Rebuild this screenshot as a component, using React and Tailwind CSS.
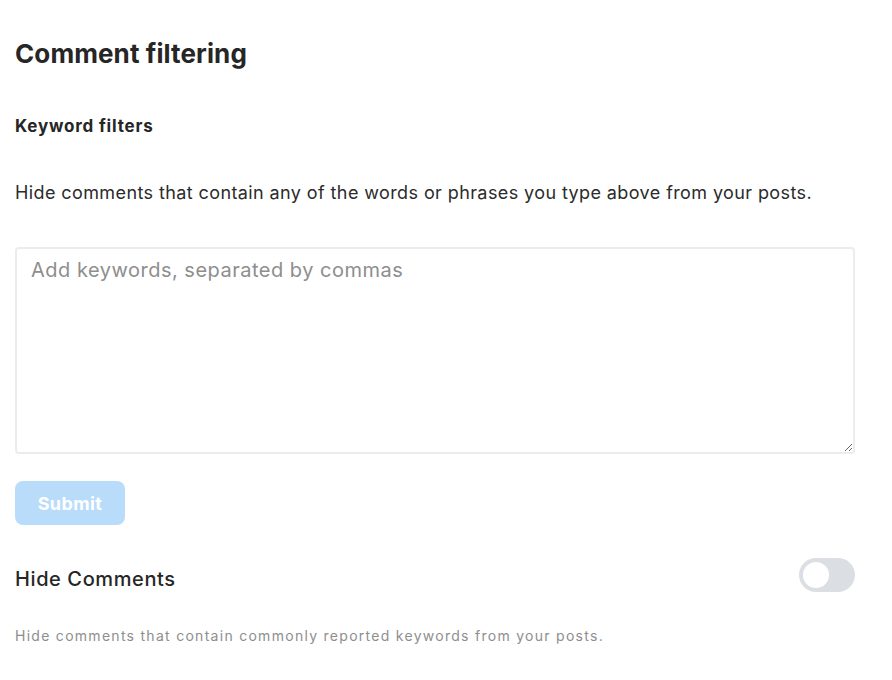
import React, { useState } from "react";

export default function App() {
  const [keywords, setKeywords] = useState("");
  const [hidden, setHidden] = useState(false);

  return (
    <div
      className="min-h-screen w-full bg-white text-[#262626] px-[15px] pt-[38px]"
      style={{ fontFamily: 'Inter, "Liberation Sans", Arial, sans-serif' }}
    >
      <div className="w-[840px]">
        {/* title */}
        <h1 className="text-[26px] leading-[32px] font-bold tracking-[0.1px]">Comment filtering</h1>

        {/* keyword filters */}
        <h2 className="mt-[46px] text-[17px] leading-[20px] font-bold tracking-[0.8px]">Keyword filters</h2>
        <p className="mt-[46px] text-[18px] leading-[22px] tracking-[0.4px] text-[#2b2b2b]">
          Hide comments that contain any of the words or phrases you type above from your posts.
        </p>

        <textarea
          value={keywords}
          onChange={(e) => setKeywords(e.target.value)}
          placeholder="Add keywords, separated by commas"
          className="mt-[43px] block w-full h-[207px] rounded-[4px] border-2 border-[#ececec] px-[14px] py-[9px] text-[20px] leading-[24px] tracking-[0.5px] text-[#262626] placeholder:text-[#8e8e8e] outline-none resize-y"
        />

        <button
          disabled={!keywords.trim()}
          className="mt-[27px] h-[44px] w-[110px] rounded-[8px] bg-[#b9dcfb] text-white text-[18px] font-bold tracking-[0.4px]"
        >
          Submit
        </button>

        {/* hide comments */}
        <div className="mt-[33px] flex items-center justify-between">
          <span className="pt-[7px] text-[20px] leading-[26px] font-medium tracking-[0.6px]">Hide Comments</span>
          <button
            onClick={() => setHidden(!hidden)}
            className={`relative h-[34px] w-[56px] rounded-full ${hidden ? "bg-[#0095f6]" : "bg-[#dbdfe4]"}`}
          >
            <span
              className={`absolute top-[2px] h-[30px] w-[30px] rounded-full bg-white border-2 border-[#dbdfe4] ${hidden ? "left-[24px]" : "left-[2px]"}`}
            />
          </button>
        </div>
        <p className="mt-[36px] text-[14px] leading-[16px] tracking-[1.28px] text-[#8e8e8e]">
          Hide comments that contain commonly reported keywords from your posts.
        </p>
      </div>
    </div>
  );
}
